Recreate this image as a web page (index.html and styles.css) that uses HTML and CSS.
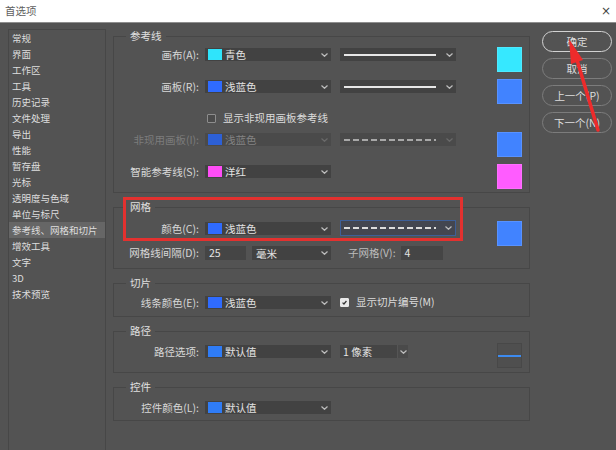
FILE: index.html
```html
<!DOCTYPE html>
<html lang="zh">
<head>
<meta charset="utf-8">
<title>首选项</title>
<link rel="stylesheet" href="styles.css">
</head>
<body>
<div class="titlebar"><span>首选项</span><span class="close">×</span></div>
<div class="dlg">
  <div class="nav">
    <div class="nav-item">常规</div>
    <div class="nav-item">界面</div>
    <div class="nav-item">工作区</div>
    <div class="nav-item">工具</div>
    <div class="nav-item">历史记录</div>
    <div class="nav-item">文件处理</div>
    <div class="nav-item">导出</div>
    <div class="nav-item">性能</div>
    <div class="nav-item">暂存盘</div>
    <div class="nav-item">光标</div>
    <div class="nav-item">透明度与色域</div>
    <div class="nav-item">单位与标尺</div>
    <div class="nav-item active">参考线、网格和切片</div>
    <div class="nav-item">增效工具</div>
    <div class="nav-item">文字</div>
    <div class="nav-item">3D</div>
    <div class="nav-item">技术预览</div>
  </div>

  <div class="main">
    <fieldset class="fs fs-guides">
      <legend>参考线</legend>
      <div class="row tall">
        <span class="lbl">画布(A):</span>
        <div class="sel"><i class="sw cyan"></i><span class="txt">青色</span><svg class="chev" viewBox="0 0 7 4"><polyline points="0.5,0.5 3.5,3.3 6.5,0.5"/></svg></div>
        <div class="lsel"><i class="line solid"></i><svg class="chev" viewBox="0 0 7 4"><polyline points="0.5,0.5 3.5,3.3 6.5,0.5"/></svg></div>
        <i class="big cyan"></i>
      </div>
      <div class="row tall">
        <span class="lbl">画板(R):</span>
        <div class="sel"><i class="sw blue"></i><span class="txt">浅蓝色</span><svg class="chev" viewBox="0 0 7 4"><polyline points="0.5,0.5 3.5,3.3 6.5,0.5"/></svg></div>
        <div class="lsel"><i class="line solid"></i><svg class="chev" viewBox="0 0 7 4"><polyline points="0.5,0.5 3.5,3.3 6.5,0.5"/></svg></div>
        <i class="big blue"></i>
      </div>
      <div class="row check-row">
        <i class="cb"></i><span class="cb-txt">显示非现用画板参考线</span>
      </div>
      <div class="row tall disabled">
        <span class="lbl">非现用画板(I):</span>
        <div class="sel"><i class="sw blue"></i><span class="txt">浅蓝色</span><svg class="chev" viewBox="0 0 7 4"><polyline points="0.5,0.5 3.5,3.3 6.5,0.5"/></svg></div>
        <div class="lsel"><i class="line dashed"></i><svg class="chev" viewBox="0 0 7 4"><polyline points="0.5,0.5 3.5,3.3 6.5,0.5"/></svg></div>
        <i class="big blue"></i>
      </div>
      <div class="row tall">
        <span class="lbl">智能参考线(S):</span>
        <div class="sel"><i class="sw magenta"></i><span class="txt">洋红</span><svg class="chev" viewBox="0 0 7 4"><polyline points="0.5,0.5 3.5,3.3 6.5,0.5"/></svg></div>
        <i class="big magenta"></i>
      </div>
    </fieldset>

    <fieldset class="fs fs-grid">
      <legend>网格</legend>
      <div class="row">
        <span class="lbl">颜色(C):</span>
        <div class="sel"><i class="sw blue"></i><span class="txt">浅蓝色</span><svg class="chev" viewBox="0 0 7 4"><polyline points="0.5,0.5 3.5,3.3 6.5,0.5"/></svg></div>
        <div class="lsel focus"><i class="line dashed"></i><svg class="chev" viewBox="0 0 7 4"><polyline points="0.5,0.5 3.5,3.3 6.5,0.5"/></svg></div>
        <i class="big blue overhang"></i>
      </div>
      <div class="row row2">
        <span class="lbl">网格线间隔(D):</span>
        <div class="inp w41">25</div>
        <div class="sel unit"><span class="txt">毫米</span><svg class="chev" viewBox="0 0 7 4"><polyline points="0.5,0.5 3.5,3.3 6.5,0.5"/></svg></div>
        <span class="sublbl">子网格(V):</span>
        <div class="inp w42">4</div>
      </div>
    </fieldset>

    <fieldset class="fs fs-slice">
      <legend>切片</legend>
      <div class="row">
        <span class="lbl">线条颜色(E):</span>
        <div class="sel"><i class="sw blue"></i><span class="txt">浅蓝色</span><svg class="chev" viewBox="0 0 7 4"><polyline points="0.5,0.5 3.5,3.3 6.5,0.5"/></svg></div>
        <i class="cb checked"><svg viewBox="0 0 9 9"><polyline points="2,4.6 3.8,6.4 7,2.6"/></svg></i>
        <span class="cb-txt">显示切片编号(M)</span>
      </div>
    </fieldset>

    <fieldset class="fs fs-path">
      <legend>路径</legend>
      <div class="row">
        <span class="lbl">路径选项:</span>
        <div class="sel"><i class="sw blue2"></i><span class="txt">默认值</span><svg class="chev" viewBox="0 0 7 4"><polyline points="0.5,0.5 3.5,3.3 6.5,0.5"/></svg></div>
        <div class="psel"><span class="txt">1 像素</span><span class="pchev"><svg class="chev" viewBox="0 0 7 4"><polyline points="0.5,0.5 3.5,3.3 6.5,0.5"/></svg></span></div>
        <div class="preview"><i class="pline"></i></div>
      </div>
    </fieldset>

    <fieldset class="fs fs-ctrl">
      <legend>控件</legend>
      <div class="row">
        <span class="lbl">控件颜色(L):</span>
        <div class="sel"><i class="sw blue2"></i><span class="txt">默认值</span><svg class="chev" viewBox="0 0 7 4"><polyline points="0.5,0.5 3.5,3.3 6.5,0.5"/></svg></div>
      </div>
    </fieldset>
  </div>

  <div class="buttons">
    <div class="btn default">确定</div>
    <div class="btn">取消</div>
    <div class="btn">上一个(P)</div>
    <div class="btn">下一个(N)</div>
  </div>
</div>

<div class="highlight"></div>
<svg class="arrow" viewBox="0 0 616 450" width="616" height="450">
  <line x1="598" y1="130" x2="577" y2="60"/>
  <polygon points="569,39 583,60 571,64"/>
</svg>
</body>
</html>
```

FILE: styles.css
```css
* { box-sizing: border-box; }

html, body {
  margin: 0;
  padding: 0;
}

body {
  width: 616px;
  height: 450px;
  overflow: hidden;
  position: relative;
  background: #535353;
  font-family: "Noto Sans CJK SC", "Noto Sans", sans-serif;
  font-size: 10.5px;
  color: #dcdcdc;
}

.titlebar {
  height: 23px;
  background: #ffffff;
  border-bottom: 1px solid #8e8e8e;
  display: flex;
  align-items: center;
  justify-content: space-between;
  padding: 0 5px 1px 5px;
  color: #606060;
  font-size: 10.5px;
  line-height: 14px;
}

.titlebar .close {
  font-family: "DejaVu Sans", sans-serif;
  font-size: 12px;
  color: #444;
}

.dlg {
  display: flex;
  height: 427px;
  padding: 6px 0 0 8px;
}

.nav {
  flex: none;
  width: 98px;
  border: 1px solid #474747;
  border-bottom: none;
  padding-top: 0;
}

.nav-item {
  height: 16px;
  line-height: 16px;
  padding-left: 3px;
  font-size: 9.5px;
  color: #dedede;
  white-space: nowrap;
}

.nav-item.active {
  background: #666666;
}

.main {
  flex: none;
  width: 417px;
  margin-left: 7px;
  display: flex;
  flex-direction: column;
  gap: 7px;
}

.fs {
  margin: 0;
  border: 1px solid #474747;
  padding: 0 7px 0 0;
  min-inline-size: 0;
}

.fs legend {
  margin-left: 12px;
  padding: 0 4px;
  font-size: 10.5px;
  line-height: 14px;
  color: #e0e0e0;
}

.fs-guides { padding-top: 4px; padding-bottom: 3px; display: flex; flex-direction: column; gap: 7px; }
.fs-grid { padding-top: 7px; padding-bottom: 8px; }
.fs-slice { padding-top: 5px; padding-bottom: 7px; }
.fs-path { padding-top: 6px; padding-bottom: 4px; }
.fs-ctrl { padding-top: 6px; padding-bottom: 6px; }

.row {
  display: flex;
  align-items: flex-start;
}

.row.tall { height: 25px; }

.lbl {
  flex: none;
  width: 85px;
  text-align: right;
  margin-top: 1px;
  line-height: 13px;
  white-space: nowrap;
  color: #d8d8d8;
}

.sel {
  flex: none;
  width: 126px;
  height: 13px;
  margin-left: 6px;
  margin-top: 1px;
  background: #424242;
  display: flex;
  align-items: center;
  padding: 0 3px 0 3px;
}

.sel .txt {
  margin-left: 3px;
  line-height: 13px;
  color: #e2e2e2;
}

.chev {
  width: 7px;
  height: 4px;
  margin-left: auto;
  fill: none;
  stroke: #bdbdbd;
  stroke-width: 1.2;
}

.sw {
  flex: none;
  width: 14px;
  height: 11px;
  display: block;
}

.sw.cyan { background: #2fe4fb; }
.sw.blue { background: #2f6bff; }
.sw.blue2 { background: #2f7cf6; }
.sw.magenta { background: #ff4df6; }

.lsel {
  flex: none;
  width: 116px;
  height: 13px;
  margin-left: 9px;
  margin-top: 1px;
  background: #424242;
  display: flex;
  align-items: center;
  padding: 0 3px 0 4px;
}

.lsel.focus {
  height: 16px;
  margin-top: -1px;
  border: 1px solid #3d5f98;
  background: #434650;
  padding-left: 3px;
}

.line {
  flex: none;
  display: block;
  width: 92px;
  height: 2px;
}

.line.solid { background: #e6e6e6; }
.line.dashed {
  background: repeating-linear-gradient(90deg, #dcdcdc 0 6px, transparent 6px 9px);
}

.big {
  flex: none;
  display: block;
  width: 25px;
  height: 25px;
  margin-left: auto;
  border: 1px solid rgba(255, 255, 255, 0.12);
}

.big.cyan { background: #36e8ff; }
.big.blue { background: #4183ff; }
.big.magenta { background: #ff5cff; }
.big.overhang { margin-bottom: -11px; }

.disabled .lbl { color: #7c7c7c; }
.disabled .sel, .disabled .lsel { background: #4a4a4a; }
.disabled .sel .txt { color: #838383; }
.disabled .sw { background: #2d60d6; }
.disabled .line.dashed {
  background: repeating-linear-gradient(90deg, #a8a8a8 0 6px, transparent 6px 9px);
}
.disabled .chev { stroke: #6a6a6a; }

.check-row {
  height: 14px;
  align-items: center;
  padding-left: 93px;
}

.cb {
  flex: none;
  display: block;
  width: 9px;
  height: 9px;
  border: 1px solid #8d8d8d;
  background: #4b4b4b;
  border-radius: 1px;
}

.cb-txt {
  margin-left: 7px;
  line-height: 14px;
  color: #dcdcdc;
  white-space: nowrap;
}

.fs-slice .cb {
  margin-left: 9px;
  margin-top: 3px;
}

.fs-slice .cb-txt {
  margin-top: 0;
}

.cb.checked {
  background: #e8e8e8;
  border-color: #e8e8e8;
}

.cb.checked svg {
  display: block;
  width: 7px;
  height: 7px;
  fill: none;
  stroke: #333;
  stroke-width: 1.6;
}

.row2 {
  margin-top: 10px;
}

.row2 .lbl {
  margin-top: 0;
  line-height: 14px;
}

.inp {
  flex: none;
  height: 14px;
  background: #454545;
  line-height: 14px;
  padding-left: 4px;
  color: #e4e4e4;
}

.inp.w41 { width: 41px; margin-left: 6px; }
.inp.w42 { width: 42px; margin-left: 5px; }

.sel.unit {
  width: 79px;
  height: 14px;
  margin-top: 0;
  padding-left: 4px;
}

.sel.unit .txt { margin-left: 0; }

.sublbl {
  margin-left: 17px;
  line-height: 14px;
  white-space: nowrap;
  color: #bdbdbd;
}

.psel {
  flex: none;
  width: 68px;
  height: 13px;
  margin-left: 9px;
  margin-top: 1px;
  background: #454545;
  display: flex;
  align-items: center;
  padding-left: 3px;
}

.psel .txt { line-height: 13px; color: #e4e4e4; }

.pchev {
  margin-left: auto;
  width: 11px;
  height: 13px;
  display: flex;
  align-items: center;
  justify-content: center;
  border-left: 1px solid #555;
  background: #4a4a4a;
}

.pchev .chev { margin-left: 0; }

.preview {
  flex: none;
  margin-left: auto;
  margin-top: -1px;
  width: 25px;
  height: 25px;
  border: 1px solid #484848;
  background: #4f4f4f;
  display: flex;
  align-items: center;
}

.pline {
  display: block;
  width: 23px;
  height: 2px;
  background: #3d8bf0;
}

.buttons {
  flex: none;
  width: 70px;
  margin-left: 12px;
  padding-top: 2px;
  display: flex;
  flex-direction: column;
  gap: 6px;
}

.btn {
  height: 21px;
  border: 1px solid #7c7c7c;
  border-radius: 11px;
  display: flex;
  align-items: center;
  justify-content: center;
  font-size: 10.5px;
  color: #dedede;
  line-height: 14px;
}

.btn.default {
  border: 1.5px solid #d2d2d2;
}

.highlight {
  position: absolute;
  left: 123px;
  top: 197px;
  width: 340px;
  height: 44px;
  border: 3px solid #e3312f;
  pointer-events: none;
}

.arrow {
  position: absolute;
  left: 0;
  top: 0;
  pointer-events: none;
}

.arrow line {
  stroke: #ee2b2b;
  stroke-width: 3.5;
  stroke-linecap: round;
}

.arrow polygon {
  fill: #ee2b2b;
}
```
